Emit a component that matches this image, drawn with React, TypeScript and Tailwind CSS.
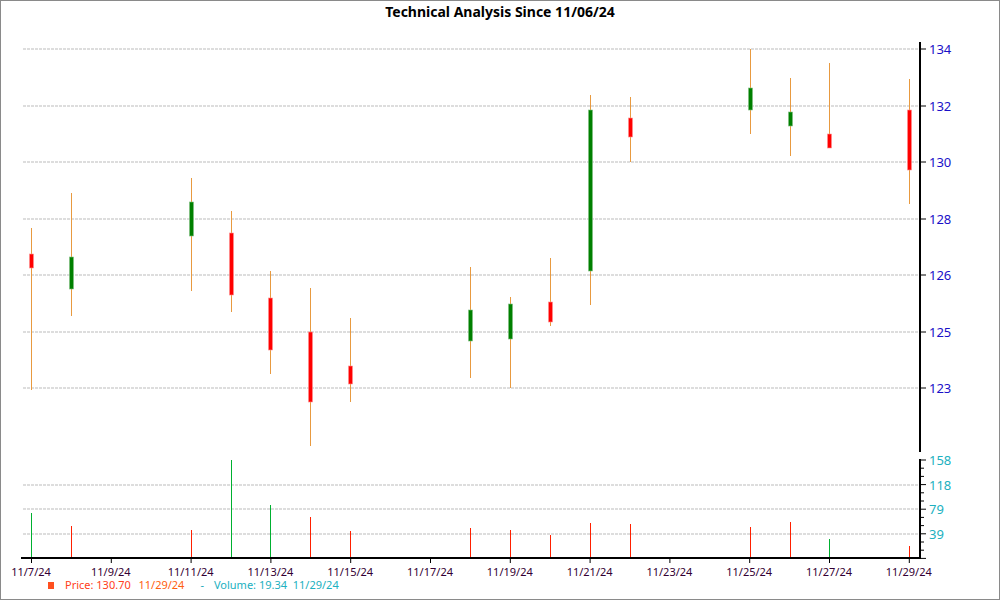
const candles = [
  { x: 30, hi: 228, lo: 390, t: 254, b: 268, up: false, v: 513, vu: true },
  { x: 70, hi: 193, lo: 316, t: 257, b: 289, up: true, v: 526, vu: false },
  { x: 190, hi: 178, lo: 291, t: 202, b: 236, up: true, v: 530, vu: false },
  { x: 230, hi: 211, lo: 312, t: 233, b: 295, up: false, v: 460, vu: true },
  { x: 269, hi: 271, lo: 374, t: 298, b: 350, up: false, v: 505, vu: true },
  { x: 309, hi: 288, lo: 446, t: 332, b: 402, up: false, v: 517, vu: false },
  { x: 349, hi: 318, lo: 402, t: 366, b: 384, up: false, v: 531, vu: false },
  { x: 469, hi: 267, lo: 378, t: 310, b: 341, up: true, v: 528, vu: false },
  { x: 509, hi: 297, lo: 388, t: 304, b: 339, up: true, v: 530, vu: false },
  { x: 549, hi: 258, lo: 326, t: 302, b: 322, up: false, v: 535, vu: false },
  { x: 589, hi: 95, lo: 305, t: 110, b: 271, up: true, v: 523, vu: false },
  { x: 629, hi: 97, lo: 162, t: 118, b: 137, up: false, v: 524, vu: false },
  { x: 749, hi: 49, lo: 134, t: 88, b: 110, up: true, v: 527, vu: false },
  { x: 789, hi: 78, lo: 156, t: 112, b: 126, up: true, v: 522, vu: false },
  { x: 828, hi: 63, lo: 148, t: 134, b: 148, up: false, v: 539, vu: true },
  { x: 908, hi: 79, lo: 204, t: 110, b: 170, up: false, v: 546, vu: false },
];

const priceTicks = [
  { y: 49, l: "134" },
  { y: 106, l: "132" },
  { y: 162, l: "130" },
  { y: 219, l: "128" },
  { y: 275, l: "126" },
  { y: 332, l: "125" },
  { y: 388, l: "123" },
];

const volTicks = [
  { y: 460, l: "158" },
  { y: 485, l: "118" },
  { y: 509, l: "79" },
  { y: 534, l: "39" },
];

const dates = ["11/7/24", "11/9/24", "11/11/24", "11/13/24", "11/15/24", "11/17/24", "11/19/24", "11/21/24", "11/23/24", "11/25/24", "11/27/24", "11/29/24"];

export default function App() {
  return (
    <div className="w-[1000px] h-[600px] bg-white border border-[#8a8a8a] flex flex-col overflow-hidden font-['Liberation_Sans',Arial,sans-serif]">
      <div className="h-[21px] pt-[1px] text-center text-[14px] font-bold text-black leading-[20px]">
        Technical Analysis Since 11/06/24
      </div>
      <svg width="998" height="556" viewBox="0 22 998 556" className="block">
        {priceTicks.map((t) => (
          <line key={t.y} x1="22" x2="918" y1={t.y} y2={t.y} stroke="#bbb" strokeDasharray="3 1" />
        ))}
        {volTicks.slice(1).map((t) => (
          <line key={t.y} x1="22" x2="918" y1={t.y} y2={t.y} stroke="#bbb" strokeDasharray="3 1" />
        ))}
        {candles.map((c) => (
          <g key={c.x}>
            <line x1={c.x + 0.5} x2={c.x + 0.5} y1={c.hi} y2={c.lo} stroke="#e89a40" />
            <rect x={c.x - 1.5} y={c.t} width="4" height={c.b - c.t} fill={c.up ? "#008000" : "#ff0000"} stroke={c.up ? "#80c080" : "#ff9090"} strokeWidth="0.6" />
            <line x1={c.x + 0.5} x2={c.x + 0.5} y1={c.v} y2="558" stroke={c.vu ? "#00b030" : "#ff2000"} />
          </g>
        ))}
        <line x1="919" x2="919" y1="42" y2="452" stroke="#000" strokeWidth="2" />
        <line x1="919" x2="919" y1="459" y2="559" stroke="#000" strokeWidth="2" />
        <line x1="20" x2="920" y1="558" y2="558" stroke="#000" strokeWidth="2" />
        {priceTicks.map((t) => (
          <g key={t.y}>
            <line x1="919" x2="925" y1={t.y} y2={t.y} stroke="#000" />
            <text x="928" y={t.y + 5} fontSize="13" fill="#1a10c8">{t.l}</text>
          </g>
        ))}
        {[0, 1, 2, 3, 4, 5, 6, 7, 8, 9, 10, 11, 12].map((i) => (
          <line key={i} x1="919" x2={i % 3 === 0 ? 925 : 923} y1={460 + i * 8.2} y2={460 + i * 8.2} stroke="#000" />
        ))}
        {volTicks.map((t) => (
          <text key={t.y} x="928" y={t.y + 5} fontSize="13" fill="#20b0c0">{t.l}</text>
        ))}
        {dates.map((d, i) => (
          <g key={d}>
            <line x1={30.5 + i * 79.8} x2={30.5 + i * 79.8} y1="558" y2="563" stroke="#000" />
            <text x={30 + i * 79.8} y="576" fontSize="11" fill="#330033" textAnchor="middle">{d}</text>
          </g>
        ))}
      </svg>
      <div className="flex items-center text-[11px] leading-[14px] pl-[47px] gap-[2px]">
        <span className="w-[6px] h-[7px] bg-[#ff5020] mr-[9px]" />
        <span className="text-[#ff4020] whitespace-pre">Price: 130.70  </span>
        <span className="text-[#ff6010]">11/29/24</span>
        <span className="text-[#20a8b8] ml-[14px] mr-[8px]">-</span>
        <span className="text-[#20b0c0] whitespace-pre">Volume: 19.34  11/29/24</span>
      </div>
    </div>
  );
}
